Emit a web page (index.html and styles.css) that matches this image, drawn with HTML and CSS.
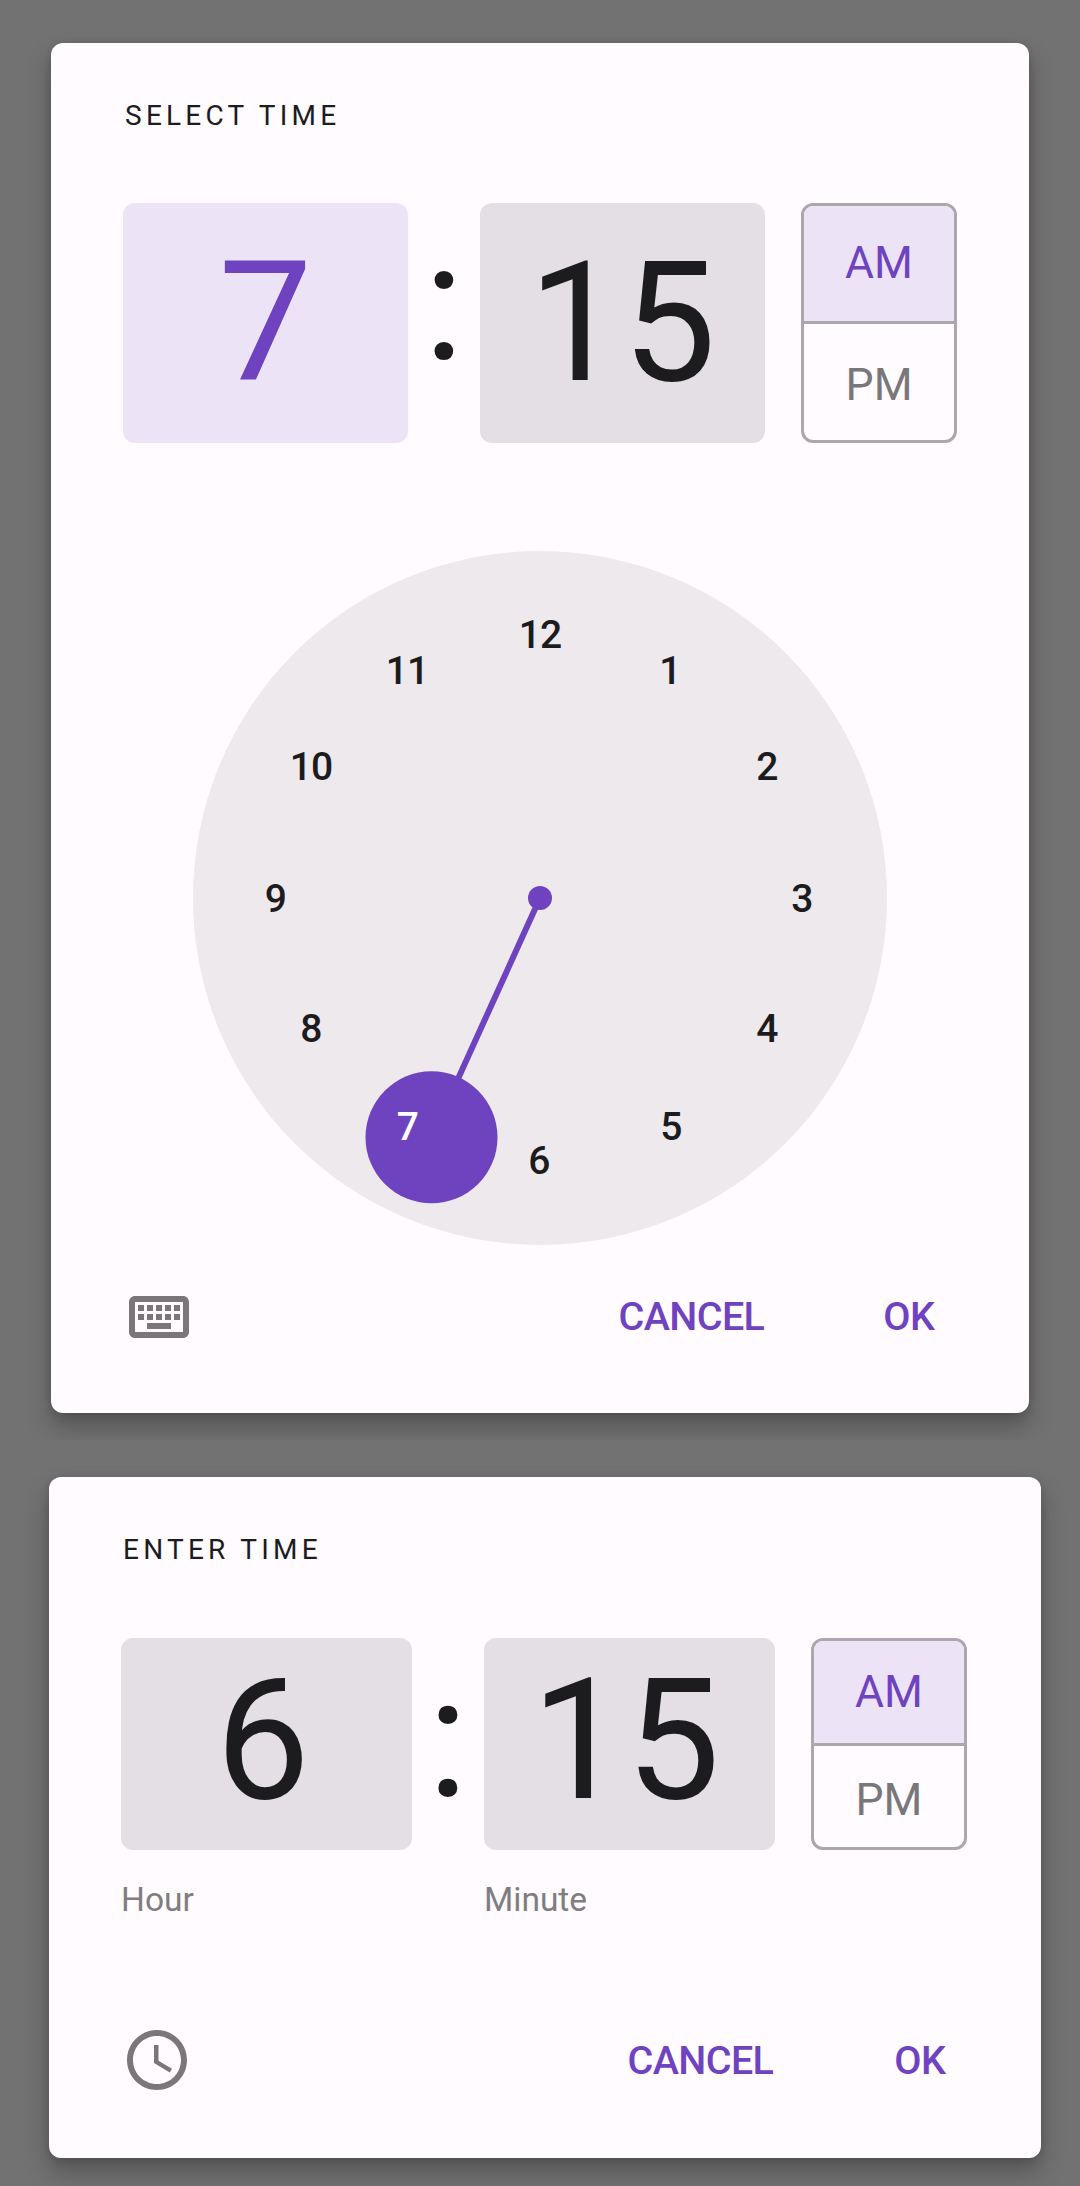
FILE: index.html
```html
<!DOCTYPE html>
<html lang="en">
<head>
<meta charset="utf-8">
<title>Time pickers</title>
<link rel="stylesheet" href="styles.css">
</head>
<body>
<section class="scene scene-dial">
  <div class="dialog dialog-dial">
    <h2 class="title">SELECT TIME</h2>
    <div class="display">
      <div class="chip chip-active">7</div>
      <div class="colon">:</div>
      <div class="chip">15</div>
      <div class="period">
        <div class="period-option period-active">AM</div>
        <div class="period-option period-last">PM</div>
      </div>
    </div>
    <svg class="dial" width="694" height="694" viewBox="193 551 694 694">
      <circle class="dial-face" cx="540" cy="898" r="347"/>
      <g class="dial-hand">
        <line x1="540" y1="898" x2="431.5" y2="1137.3"/>
        <circle cx="540" cy="898" r="12"/>
        <circle cx="431.5" cy="1137.3" r="66"/>
      </g>
      <g class="dial-numbers">
        <text x="540" y="648">12</text>
        <text x="670" y="684">1</text>
        <text x="767" y="780">2</text>
        <text x="802" y="912">3</text>
        <text x="767" y="1042">4</text>
        <text x="671" y="1139.5">5</text>
        <text x="539" y="1174">6</text>
        <text class="dial-selected" x="407.5" y="1139.5">7</text>
        <text x="311" y="1042">8</text>
        <text x="275.5" y="912">9</text>
        <text x="311" y="780">10</text>
        <text x="407" y="684">11</text>
      </g>
    </svg>
    <div class="actions">
      <svg class="icon" width="72" height="72" viewBox="0 0 24 24">
        <path d="M20 7v10H4V7h16m0-2H4c-1.1 0-2 .9-2 2v10c0 1.1.9 2 2 2h16c1.1 0 2-.9 2-2V7c0-1.1-.9-2-2-2zm-9 3h2v2h-2V8zm0 3h2v2h-2v-2zM8 8h2v2H8V8zm0 3h2v2H8v-2zm-3 0h2v2H5v-2zm0-3h2v2H5V8zm3 6h8v2H8v-2zm6-3h2v2h-2v-2zm0-3h2v2h-2V8zm3 3h2v2h-2v-2zm0-3h2v2h-2V8z"/>
      </svg>
      <div class="button button-cancel">CANCEL</div>
      <div class="button">OK</div>
    </div>
  </div>
</section>
<section class="scene scene-input">
  <div class="dialog dialog-input">
    <h2 class="title">ENTER TIME</h2>
    <div class="display">
      <div class="chip">6</div>
      <div class="colon">:</div>
      <div class="chip">15</div>
      <div class="period">
        <div class="period-option period-active">AM</div>
        <div class="period-option period-last">PM</div>
      </div>
    </div>
    <div class="labels"><div class="label">Hour</div><div class="label">Minute</div></div>
    <div class="actions">
      <svg class="icon" width="72" height="72" viewBox="0 0 24 24">
        <path d="M11.99 2C6.47 2 2 6.48 2 12s4.47 10 9.99 10C17.52 22 22 17.52 22 12S17.52 2 11.99 2zM12 20c-4.42 0-8-3.58-8-8s3.58-8 8-8 8 3.58 8 8-3.58 8-8 8zm.5-13H11v6l5.250 3.150.750-1.230-4.500-2.670z"/>
      </svg>
      <div class="button button-cancel">CANCEL</div>
      <div class="button">OK</div>
    </div>
  </div>
</section>
</body>
</html>
```
FILE: styles.css
```css
* { box-sizing: border-box; }
body {
  margin: 0;
  background: #727272;
  font-family: Roboto, "Liberation Sans", sans-serif;
  color: #1c1b1e;
}
.scene { overflow: hidden; background: #727272; }
.scene-dial { height: 1440px; padding: 43px 0 0 51px; }
.scene-input { height: 746px; padding: 37px 0 0 48.5px; }
.dialog {
  display: flex;
  flex-direction: column;
  background: #fffbff;
  border-radius: 12px;
  box-shadow: 0 14px 24px rgba(0, 0, 0, .25), 0 2px 8px rgba(0, 0, 0, .14);
}
.dialog-dial { width: 978px; height: 1370px; padding: 57px 72px 0; }
.dialog-input { width: 992.5px; height: 680.5px; padding: 57px 72.5px 0; }
.title {
  margin: 0;
  padding-left: 2px;
  font-size: 28px;
  line-height: 32px;
  font-weight: 400;
  letter-spacing: 4.25px;
}
.display { display: flex; margin-top: 70.5px; height: 240px; }
.dialog-input .display { margin-top: 72px; height: 212px; }
.chip {
  width: 285px;
  border-radius: 12px;
  background: #e4dfe4;
  font-size: 167px;
  line-height: 241px;
  text-align: center;
}
.dialog-input .chip { width: 290.5px; padding-right: 7px; font-size: 168px; line-height: 205px; }
.chip-active { background: #ece4f6; color: #6f43bf; }
.colon { width: 72px; font-size: 166px; line-height: 200px; text-align: center; }
.dialog-input .colon { width: 72.5px; font-size: 168px; line-height: 202px; }
.period {
  display: flex;
  flex-direction: column;
  width: 156px;
  margin-left: 36.5px;
  border: 3px solid #aba7ac;
  border-radius: 12px;
  overflow: hidden;
}
.period-option {
  flex: 1;
  display: flex;
  align-items: center;
  justify-content: center;
  font-size: 44.5px;
  color: #7a777b;
}
.period-active {
  flex: 0 0 118px;
  background: #ece4f6;
  color: #6f43bf;
  border-bottom: 3px solid #aba7ac;
}
.dialog-input .period-active { flex-basis: 105px; }
.period-last { padding-top: 6px; }
.dial { align-self: center; margin-top: 108.5px; }
.dial-face { fill: #ede9ed; }
.dial-hand { fill: #6f43bf; stroke: none; }
.dial-hand line { stroke: #6f43bf; stroke-width: 6px; }
.dial-numbers { font-size: 39px; font-weight: 500; letter-spacing: -.8px; text-anchor: middle; fill: #1c1b1e; }
.dial-numbers .dial-selected { fill: #fff; }
.labels {
  display: grid;
  grid-template-columns: 363px 1fr;
  margin-top: 30px;
  font-size: 33.5px;
  line-height: 40px;
  color: #807d81;
}
.actions { display: flex; align-items: center; height: 72px; margin-top: 36px; }
.dialog-input .actions { margin-top: 104px; }
.icon { fill: #7a777b; }
.button {
  font-size: 39.5px;
  line-height: 46px;
  font-weight: 500;
  letter-spacing: -.6px;
  color: #6f43bf;
}
.button-cancel { margin: 0 119px 0 423.5px; }
.dialog-input .button { padding-top: 2px; }
.dialog-input .button-cancel { margin: 0 121px 0 434.5px; }
```
